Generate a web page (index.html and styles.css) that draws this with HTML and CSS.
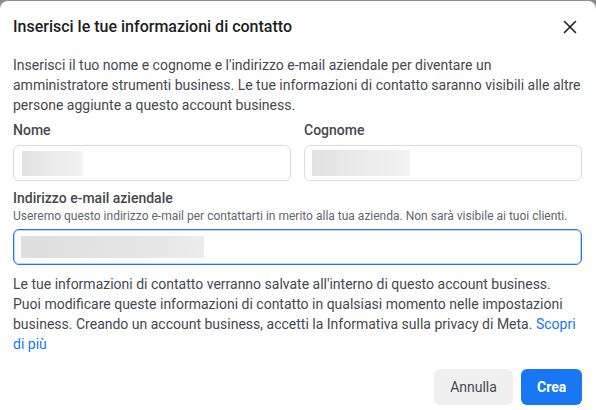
FILE: index.html
```html
<!DOCTYPE html>
<html lang="it">
<head>
<meta charset="utf-8">
<link rel="stylesheet" href="styles.css">
</head>
<body>
<div class="dialog">
  <div class="header">
    <h1 class="title">Inserisci le tue informazioni di contatto</h1>
    <button class="close" aria-label="Chiudi">
      <svg width="14" height="14" viewBox="0 0 14 14"><path d="M1.5 1.5L12.5 12.5M12.5 1.5L1.5 12.5" stroke="#1c1e21" stroke-width="1.6" stroke-linecap="round"/></svg>
    </button>
  </div>
  <p class="intro">Inserisci il tuo nome e cognome e l'indirizzo e-mail aziendale per diventare un amministratore strumenti business. Le tue informazioni di contatto saranno visibili alle altre persone aggiunte a questo account business.</p>
  <div class="names">
    <div class="field">
      <label class="label">Nome</label>
      <div class="input"><span class="blur blur-nome"></span></div>
    </div>
    <div class="field">
      <label class="label">Cognome</label>
      <div class="input"><span class="blur blur-cognome"></span></div>
    </div>
  </div>
  <div class="field email-field">
    <label class="label">Indirizzo e-mail aziendale</label>
    <div class="hint">Useremo questo indirizzo e-mail per contattarti in merito alla tua azienda. Non sarà visibile ai tuoi clienti.</div>
    <div class="input focused"><span class="blur blur-email"></span></div>
  </div>
  <p class="note">Le tue informazioni di contatto verranno salvate all'interno di questo account business. Puoi modificare queste informazioni di contatto in qualsiasi momento nelle impostazioni business. Creando un account business, accetti la Informativa sulla privacy di Meta. <a class="link" href="#">Scopri di più</a></p>
  <div class="actions">
    <button class="btn btn-secondary">Annulla</button>
    <button class="btn btn-primary">Crea</button>
  </div>
</div>
</body>
</html>
```
FILE: styles.css
```css
html, body {
  margin: 0;
  padding: 0;
  height: 100%;
}
body {
  background: #8d8d8d;
  font-family: Roboto, "Liberation Sans", Arial, sans-serif;
  color: #444950;
  overflow: hidden;
}
.dialog {
  margin-top: 1px;
  height: calc(100% - 1px);
  background: #fff;
  border-radius: 8px 8px 0 0;
  padding: 0 14px 0 13px;
  box-sizing: border-box;
}
.header {
  height: 52px;
  display: flex;
  align-items: center;
  justify-content: space-between;
}
.title {
  margin: 0;
  font-size: 16px;
  font-weight: 500;
  color: #1c1e21;
  line-height: 20px;
}
.close {
  border: 0;
  background: none;
  padding: 0;
  width: 14px;
  height: 14px;
  margin-right: 5px;
  display: flex;
}
.intro {
  margin: 2px 0 0;
  font-size: 14px;
  line-height: 20px;
}
.names {
  display: grid;
  grid-template-columns: 1fr 1fr;
  gap: 13px;
  margin-top: 5px;
}
.field {
  display: flex;
  flex-direction: column;
}
.label {
  font-size: 14px;
  font-weight: 500;
  line-height: 20px;
  color: #444950;
}
.input {
  margin-top: 5px;
  height: 36px;
  border: 1px solid #dadde1;
  border-radius: 6px;
  box-sizing: border-box;
  display: flex;
  align-items: center;
  padding-left: 7px;
}
.blur {
  display: block;
  height: 25px;
  background: linear-gradient(90deg, #e2e2e2, #eeeeee 70%, #f3f3f3);
}
.blur-nome { width: 61px; margin-left: 1px; }
.blur-cognome { width: 98px; height: 26px; }
.blur-email { width: 183px; height: 22px; background: linear-gradient(90deg, #dedede, #e6e6e6 70%, #ececec); }
.email-field {
  margin-top: 7px;
}
.hint {
  font-size: 12px;
  line-height: 16px;
  color: #606770;
}
.input.focused {
  border: 1px solid #1877f2;
  box-shadow: inset 0 0 0 1px #bcd6fa;
  height: 36px;
}
.note {
  margin: 9px 0 0;
  font-size: 14px;
  line-height: 20px;
}
.link {
  color: #1877f2;
  text-decoration: none;
}
.actions {
  display: flex;
  justify-content: flex-end;
  gap: 8px;
  margin-top: 15px;
}
.btn {
  height: 36px;
  border: 0;
  border-radius: 6px;
  font-family: Roboto, "Liberation Sans", Arial, sans-serif;
  font-size: 14px;
  padding: 0 16px;
}
.btn-secondary {
  background: #f0f0f0;
  color: #444950;
  width: 79px;
}
.btn-primary {
  background: #1877f2;
  color: #fff;
  font-weight: 700;
  width: 61px;
}
```
